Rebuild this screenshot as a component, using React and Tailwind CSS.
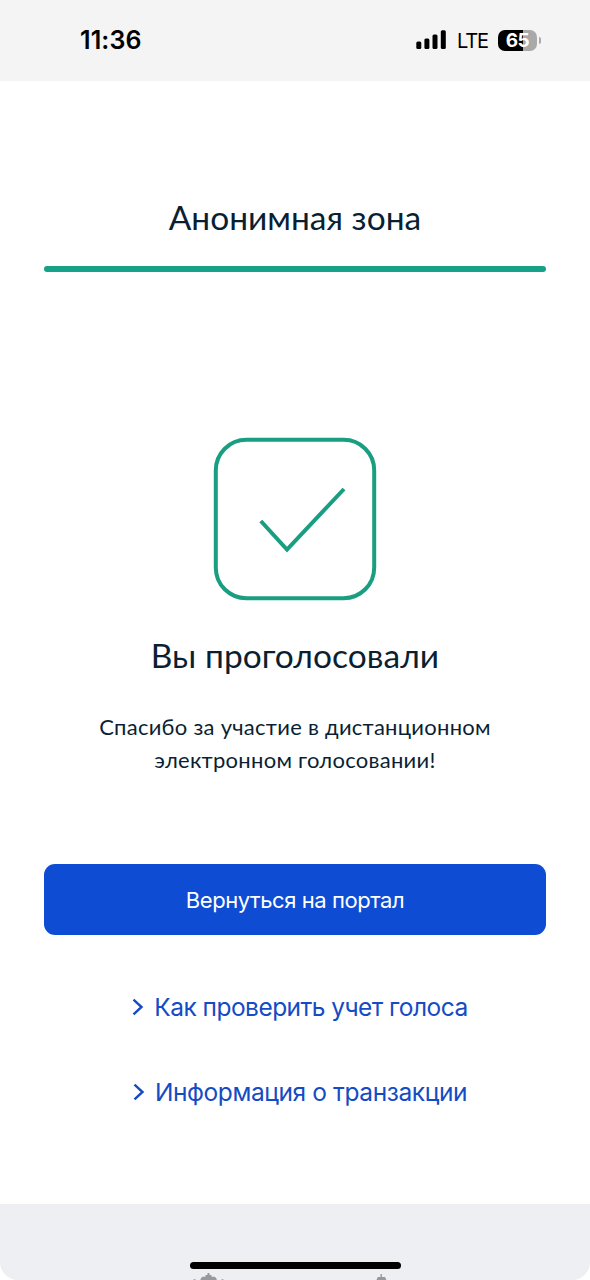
function SignalIcon() {
  return (
    <svg className="h-[20px] w-[32px]" viewBox="0 0 32 20" aria-hidden="true">
      <rect x="0.3" y="11.6" width="5" height="7.4" rx="1.5" />
      <rect x="8.4" y="8.6" width="5" height="10.4" rx="1.5" />
      <rect x="16.5" y="4.6" width="5" height="14.4" rx="1.5" />
      <rect x="24.8" y="0.2" width="5" height="18.8" rx="1.5" />
    </svg>
  );
}

function Battery() {
  return (
    <div className="flex items-center">
      <div className="flex h-[21px] w-[39px] items-center justify-center rounded-[7px] bg-[linear-gradient(90deg,#000_65%,#a9a9a9_65%)] font-['Inter'] text-[19px] leading-none font-bold tracking-[-0.4px] text-white">
        65
      </div>
      <div className="ml-[1.5px] h-[7px] w-[2.5px] rounded-r-full bg-[#a9a9a9]" />
    </div>
  );
}

function StatusBar() {
  return (
    <header className="flex h-[81px] items-start bg-[#f4f4f4] pt-[24px] pl-[80px] text-black">
      <div className="h-[32px] w-[336px] font-['Inter'] text-[25px] leading-[32px] font-semibold tracking-[0.1px]">
        11:36
      </div>
      <div className="flex h-[32px] items-center">
        <SignalIcon />
        <span className="ml-[9px] w-[41px] pt-px font-['Inter'] text-[20px] leading-[32px] tracking-[-1.1px]">LTE</span>
        <Battery />
      </div>
    </header>
  );
}

function PortalLink({ children, className }) {
  return (
    <a className={`flex h-[32px] items-center justify-center gap-[10px] pl-[10px] text-[#154bc4] ${className}`}>
      <svg className="h-[18px] w-[12px]" viewBox="0 0 12 18" fill="none" stroke="currentColor" strokeWidth="2.4" aria-hidden="true">
        <path d="M1.5 1.7 L9.5 9 L1.5 16.3" />
      </svg>
      <span className="font-['Inter'] text-[24.5px] leading-[32px] whitespace-nowrap">{children}</span>
    </a>
  );
}

function Footer() {
  return (
    <footer className="relative h-[76px] overflow-hidden rounded-b-[18px] bg-[#edeff3] pt-[58px]">
      <div className="mx-auto h-[7px] w-[211px] rounded-full bg-black" />
      <svg className="absolute bottom-0 left-[190px] h-[9px] w-[200px]" viewBox="0 0 200 9" fill="#98999b" aria-hidden="true">
        <path d="M17.5 2h2v2h2v1.8h3.4l1.8 2.2v1H10.5V8l1.8-2.2h3.2V4h2z" />
        <path d="M3.5 8.2h2V9h-2zM31.5 8.2h2V9h-2z" />
        <path d="M190.5 3h1.4v3h3.2l1.2 3h-9.8l1.2-3h2.8z" />
      </svg>
    </footer>
  );
}

export default function App() {
  return (
    <div className="flex h-[1280px] w-[590px] flex-col overflow-hidden bg-white">
      <StatusBar />
      <main className="flex h-[1123px] flex-col px-[44px] pt-[116px] text-center font-['Lato','Open_Sans',sans-serif] text-[#0b1f33]">
        <h1 className="h-[40px] text-[33.5px] leading-[40px] whitespace-nowrap">Анонимная зона</h1>
        <div className="mt-[29px] h-[6px] rounded-full bg-[#17a186]" />
        <svg className="mt-[165px] h-[164px] w-[164px] self-center" viewBox="0 0 164 164" fill="none" stroke="#1a9e81" strokeWidth="4" aria-hidden="true">
          <rect x="2.8" y="2.8" width="158.4" height="158.4" rx="30.5" />
          <path d="M47.8 84 L74 112.5 L131 52" />
        </svg>
        <h2 className="mt-[34px] h-[40px] text-[33.5px] leading-[40px] tracking-[0.05px] whitespace-nowrap">Вы проголосовали</h2>
        <p className="mt-[35px] h-[66px] text-[22px] leading-[33px] tracking-[0.27px] whitespace-nowrap">
          Спасибо за участие в дистанционном
          <br />
          электронном голосовании!
        </p>
        <button className="mt-[88px] h-[71px] shrink-0 rounded-[11px] bg-[#0d4cd3] pt-px font-['Inter'] text-[22px] tracking-[-0.44px] text-white">
          Вернуться на портал
        </button>
        <nav className="mt-[56px] flex flex-col gap-[53px]">
          <PortalLink className="tracking-[-0.53px]">Как проверить учет голоса</PortalLink>
          <PortalLink className="tracking-[-0.4px]">Информация о транзакции</PortalLink>
        </nav>
      </main>
      <Footer />
    </div>
  );
}
